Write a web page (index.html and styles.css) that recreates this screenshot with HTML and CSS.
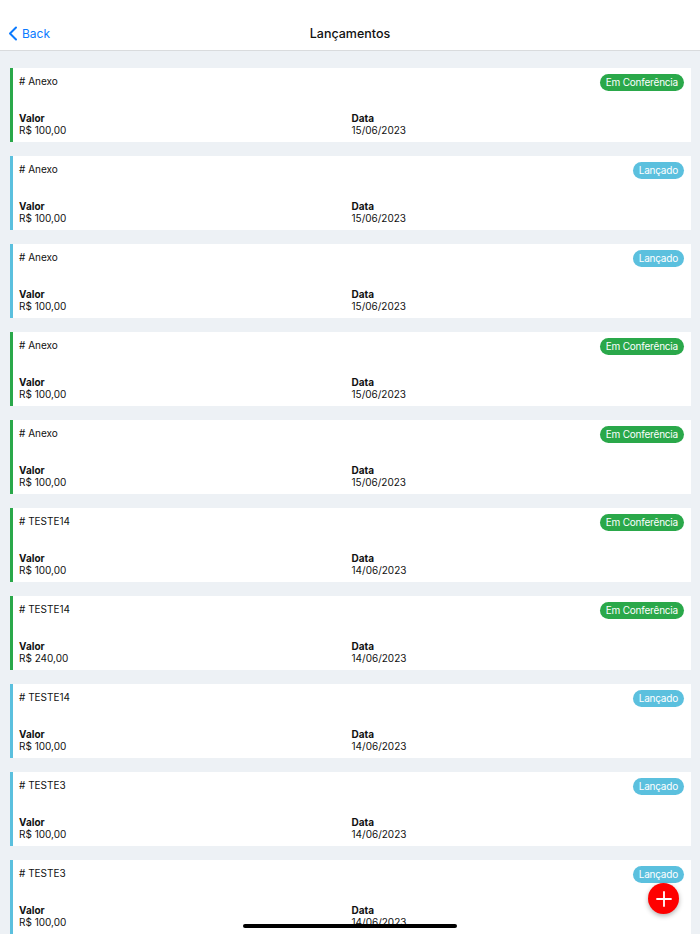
FILE: index.html
```html
<!DOCTYPE html>
<html>
<head>
    <title>Lançamentos</title>
    <meta charset="UTF-8">
    <meta name="viewport" content="width=device-width, initial-scale=1.0">
    <link rel="stylesheet" href="styles.css">
</head>
<body>
    <div class="grabber"><span></span><span></span><span></span></div>
    <header class="header">
        <a class="back" href="#">
            <svg width="10" height="15" viewBox="0 0 10 15"><path d="M8 1.5 2 7.5l6 6" fill="none" stroke="#0a7aff" stroke-width="2" stroke-linecap="round" stroke-linejoin="round"/></svg>
            Back
        </a>
        <div class="title">Lançamentos</div>
    </header>

    <main class="list">
        <div class="card green">
            <div class="card-top"><span class="name"># Anexo</span><span class="badge green-bg">Em Conferência</span></div>
            <div class="card-info">
                <div><b>Valor</b><span>R$ 100,00</span></div>
                <div><b>Data</b><span>15/06/2023</span></div>
            </div>
        </div>
        <div class="card blue">
            <div class="card-top"><span class="name"># Anexo</span><span class="badge blue-bg">Lançado</span></div>
            <div class="card-info">
                <div><b>Valor</b><span>R$ 100,00</span></div>
                <div><b>Data</b><span>15/06/2023</span></div>
            </div>
        </div>
        <div class="card blue">
            <div class="card-top"><span class="name"># Anexo</span><span class="badge blue-bg">Lançado</span></div>
            <div class="card-info">
                <div><b>Valor</b><span>R$ 100,00</span></div>
                <div><b>Data</b><span>15/06/2023</span></div>
            </div>
        </div>
        <div class="card green">
            <div class="card-top"><span class="name"># Anexo</span><span class="badge green-bg">Em Conferência</span></div>
            <div class="card-info">
                <div><b>Valor</b><span>R$ 100,00</span></div>
                <div><b>Data</b><span>15/06/2023</span></div>
            </div>
        </div>
        <div class="card green">
            <div class="card-top"><span class="name"># Anexo</span><span class="badge green-bg">Em Conferência</span></div>
            <div class="card-info">
                <div><b>Valor</b><span>R$ 100,00</span></div>
                <div><b>Data</b><span>15/06/2023</span></div>
            </div>
        </div>
        <div class="card green">
            <div class="card-top"><span class="name"># TESTE14</span><span class="badge green-bg">Em Conferência</span></div>
            <div class="card-info">
                <div><b>Valor</b><span>R$ 100,00</span></div>
                <div><b>Data</b><span>14/06/2023</span></div>
            </div>
        </div>
        <div class="card green">
            <div class="card-top"><span class="name"># TESTE14</span><span class="badge green-bg">Em Conferência</span></div>
            <div class="card-info">
                <div><b>Valor</b><span>R$ 240,00</span></div>
                <div><b>Data</b><span>14/06/2023</span></div>
            </div>
        </div>
        <div class="card blue">
            <div class="card-top"><span class="name"># TESTE14</span><span class="badge blue-bg">Lançado</span></div>
            <div class="card-info">
                <div><b>Valor</b><span>R$ 100,00</span></div>
                <div><b>Data</b><span>14/06/2023</span></div>
            </div>
        </div>
        <div class="card blue">
            <div class="card-top"><span class="name"># TESTE3</span><span class="badge blue-bg">Lançado</span></div>
            <div class="card-info">
                <div><b>Valor</b><span>R$ 100,00</span></div>
                <div><b>Data</b><span>14/06/2023</span></div>
            </div>
        </div>
        <div class="card blue">
            <div class="card-top"><span class="name"># TESTE3</span><span class="badge blue-bg">Lançado</span></div>
            <div class="card-info">
                <div><b>Valor</b><span>R$ 100,00</span></div>
                <div><b>Data</b><span>14/06/2023</span></div>
            </div>
        </div>
    </main>

    <!-- floating add button -->
    <button class="fab">
        <svg width="16" height="16" viewBox="0 0 16 16"><path d="M8 1v14M1 8h14" stroke="#fff" stroke-width="1.8" stroke-linecap="round"/></svg>
    </button>
    <div class="home-bar"></div>
</body>
</html>
```

FILE: styles.css
```css
/* Lancamentos list */
html, body {
    height: 100%;
}

body {
    margin: 0;
    font-family: Inter, "Noto Sans", sans-serif;
    background-color: #edf1f5;
    color: #111;
    overflow: hidden;
}

.grabber {
    position: absolute;
    top: 7px;
    left: 0;
    right: 0;
    display: flex;
    justify-content: center;
    gap: 2px;
}

.grabber span {
    width: 3px;
    height: 3px;
    border-radius: 50%;
    background-color: #dcdcdc;
}

.header {
    background-color: #fff;
    height: 51px;
    border-bottom: 1px solid #d9dbdd;
    display: flex;
    align-items: center;
    position: relative;
    padding-top: 17px;
    box-sizing: border-box;
}

.back {
    display: flex;
    align-items: center;
    gap: 4px;
    color: #0a7aff;
    text-decoration: none;
    font-size: 12px;
    padding-left: 8px;
}

.title {
    position: absolute;
    left: 0;
    right: 0;
    bottom: 9px;
    text-align: center;
    font-size: 12.5px;
    font-weight: 500;
    pointer-events: none;
}

.list {
    padding: 17px 9px 0 10px;
    display: flex;
    flex-direction: column;
    gap: 14px;
}

.card {
    background-color: #fff;
    border-left: 3px solid;
    padding: 6px 7px 6px 6px;
}

.card.green {
    border-left-color: #2aa84a;
}

.card.blue {
    border-left-color: #5bc0de;
}

.card-top {
    display: flex;
    justify-content: space-between;
    align-items: flex-start;
    height: 17px;
}

.name {
    font-size: 10px;
    line-height: 14px;
}

.badge {
    color: #fff;
    font-size: 10px;
    letter-spacing: -0.2px;
    height: 17px;
    line-height: 17px;
    padding: 0 6px;
    border-radius: 9px;
}

.green-bg {
    background-color: #2aa84a;
}

.blue-bg {
    background-color: #5bc0de;
}

.card-info {
    display: grid;
    grid-template-columns: 1fr 1fr;
    margin-top: 21px;
    font-size: 10px;
    line-height: 12px;
}

.card-info b,
.card-info span {
    display: block;
}

.card-info b {
    font-weight: 700;
}

.fab {
    position: fixed;
    left: 648px;
    top: 883px;
    width: 31px;
    height: 31px;
    border-radius: 50%;
    border: none;
    background-color: #fe0000;
    box-shadow: 0 2px 5px rgba(0, 0, 0, 0.3);
    display: flex;
    align-items: center;
    justify-content: center;
    padding: 0;
}

.home-bar {
    position: fixed;
    left: 243px;
    top: 924px;
    width: 214px;
    height: 4px;
    border-radius: 2px;
    background-color: #000;
}
```
